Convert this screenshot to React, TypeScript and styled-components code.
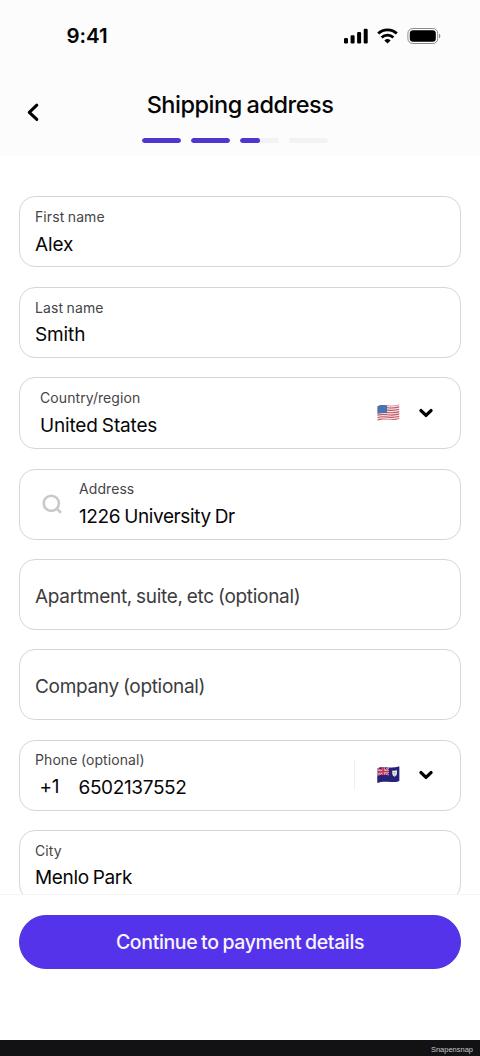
import React from 'react';
import styled, { createGlobalStyle } from 'styled-components';

const GlobalStyle = createGlobalStyle`
  * { box-sizing: border-box; }
  body {
    margin: 0;
    background: #fff;
    color: #060607;
    font-family: Inter, "Liberation Sans", sans-serif;
  }
`;

const Screen = styled.div`
  width: 480px;
  height: 1056px;
  display: flex;
  flex-direction: column;
  overflow: hidden;
  background: #fff;
`;

const Top = styled.header`
  flex: none;
  height: 156px;
  background: #fcfcfc;
`;

const StatusBar = styled.div`
  height: 72px;
  display: flex;
  justify-content: space-between;
  align-items: center;
  padding: 0 39.5px 0 66.5px;
`;

const Time = styled.span`
  font-size: 20.5px;
  font-weight: 600;
  line-height: 24px;
  letter-spacing: -0.05px;
`;

const StatusIcons = styled.div`
  display: flex;
  align-items: center;
  gap: 9px;
  svg { display: block; }
`;

const NavBar = styled.div`
  height: 84px;
  display: grid;
  grid-template-columns: 66px 1fr 66px;
`;

const BackButton = styled.button`
  border: 0;
  padding: 30px 0 0 26px;
  background: none;
  display: flex;
  align-items: flex-start;
`;

const Heading = styled.div`
  display: flex;
  flex-direction: column;
  align-items: center;
`;

const Title = styled.h1`
  margin: 19px 0 0;
  font-size: 23.5px;
  line-height: 28px;
  font-weight: 500;
  letter-spacing: -0.48px;
  word-spacing: -1px;
  white-space: nowrap;
`;

const Steps = styled.div`
  display: flex;
  gap: 10px;
  margin: 18.5px 9.5px 0 0;
`;

const Step = styled.div<{ $fill: number }>`
  width: 39px;
  height: 5px;
  border-radius: 3px;
  overflow: hidden;
  background: #f3f3f5;
  &::before {
    content: "";
    display: block;
    height: 100%;
    border-radius: 3px;
    width: ${p => p.$fill}%;
    background: #5135d0;
  }
`;

const Form = styled.main`
  flex: none;
  height: 739px;
  padding: 40px 19px 0;
  overflow: hidden;
  display: flex;
  flex-direction: column;
  border-bottom: 1px solid #f3f3f3;
`;

const Field = styled.div<{ $gap?: number; $height?: number; $inset?: number; $end?: number }>`
  flex: none;
  height: ${p => p.$height ?? 71}px;
  margin-bottom: ${p => p.$gap ?? 19}px;
  padding: 0 ${p => p.$end ?? 27}px 0 ${p => p.$inset ?? 15}px;
  border: 1px solid #d6d6d8;
  border-radius: 16px;
  display: flex;
`;

const Copy = styled.div<{ $top?: number }>`
  flex: 1;
  padding-top: ${p => p.$top ?? 11}px;
  white-space: nowrap;
`;

const Label = styled.div`
  font-size: 14px;
  line-height: 18px;
  color: #454547;
  letter-spacing: 0.08px;
  word-spacing: -0.5px;
`;

const Value = styled.div<{ $track?: number; $lead?: number }>`
  margin-top: ${p => p.$lead ?? 7}px;
  font-size: 19px;
  line-height: 24px;
  letter-spacing: ${p => p.$track ?? -0.12}px;
  word-spacing: -1px;
`;

const Placeholder = styled.div<{ $track: number }>`
  align-self: center;
  padding-top: 4px;
  font-size: 19px;
  line-height: 24px;
  color: #3c3c3e;
  letter-spacing: ${p => p.$track}px;
  word-spacing: -1px;
`;

const PhoneRow = styled(Value)`
  display: flex;
  padding-left: 4.5px;
`;

const Prefix = styled.span`
  width: 39px;
  margin-top: -1px;
  margin-bottom: 1px;
`;

const Picker = styled.div<{ $lift?: number }>`
  display: flex;
  align-items: center;
  gap: 19px;
  padding-bottom: ${p => p.$lift ?? 0}px;
  svg { display: block; }
`;

const Divider = styled.i`
  width: 1px;
  height: 31px;
  margin-right: 3px;
  background: #efeff0;
`;

const SearchSlot = styled.div`
  width: 37px;
  padding-top: 24px;
`;

const Footer = styled.footer`
  flex: 1;
  padding: 20px 19px 0;
`;

const Continue = styled.button`
  display: block;
  width: 100%;
  height: 54px;
  border: 1px solid #5335d8;
  border-radius: 27px;
  padding: 0;
  background: #5433ea;
  color: #f8f5ff;
  font-family: inherit;
  font-size: 19.5px;
  font-weight: 500;
  letter-spacing: -0.37px;
  word-spacing: -1px;
`;

const Credit = styled.div`
  flex: none;
  height: 16px;
  padding: 0 7px 0 0;
  background: #121214;
  color: #c6c6c8;
  font-family: "Liberation Sans", sans-serif;
  font-size: 7.5px;
  line-height: 19px;
  text-align: right;
`;

const Signal = () => (
  <svg width="24" height="16" viewBox="0 0 24 16">
    <rect x="0" y="10" width="4" height="5.5" rx="1.2" />
    <rect x="6.6" y="7.2" width="4" height="8.3" rx="1.2" />
    <rect x="13.1" y="4" width="4" height="11.5" rx="1.2" />
    <rect x="19.7" y="0.7" width="4" height="14.8" rx="1.2" />
  </svg>
);

const Wifi = () => (
  <svg width="21" height="16" viewBox="0 0 21 16">
    <g fill="none" stroke="#000" strokeWidth="2.8">
      <path d="M1.2 5.6a13.3 13.3 0 0 1 18.6 0" />
      <path d="M4.6 9.5a8.5 8.5 0 0 1 11.8 0" />
    </g>
    <path d="M10.5 15.6 7.4 12.5a4.5 4.5 0 0 1 6.2 0z" />
  </svg>
);

const Battery = () => (
  <svg width="34" height="16" viewBox="0 0 34 16">
    <rect x="0.9" y="0.5" width="29.8" height="15" rx="4.8" fill="none" stroke="#8c8c8c" />
    <rect x="2.8" y="2.3" width="26" height="11.4" rx="3.2" />
    <path d="M32 5.7c1.8.7 1.8 3.9 0 4.6z" fill="#8c8c8c" />
  </svg>
);

const Back = () => (
  <svg width="14" height="20" viewBox="0 0 14 20" fill="none" stroke="#000" strokeWidth="3.1" strokeLinecap="round" strokeLinejoin="round">
    <path d="M10.8 3.2 3.3 10.3l7.5 7.1" />
  </svg>
);

const Chevron = () => (
  <svg width="14" height="10" viewBox="0 0 14 10" fill="none" stroke="#000" strokeWidth="3.3" strokeLinecap="round" strokeLinejoin="round">
    <path d="M2 2.6 7 7.4l5-4.8" />
  </svg>
);

const Search = () => (
  <svg width="20" height="20" viewBox="0 0 20 20" fill="none" stroke="#c9c9c9" strokeWidth="2.6">
    <circle cx="9.3" cy="9.3" r="7.6" />
    <path d="m14.6 14.6 4.4 4.2" />
  </svg>
);

const wave = 'M.5 2.2C4 .4 7.5 .9 11 1.5S18.5 1.7 22.2 .5V15C18.5 16.3 14.5 16 11 15.6S4.5 15.4 .5 16.8z';

const FlagUS = () => (
  <svg width="23" height="18" viewBox="0 0 23 18">
    <clipPath id="us"><path d={wave} /></clipPath>
    <g clipPath="url(#us)">
      <rect width="23" height="18" fill="#f1e4e6" />
      <g fill="none" stroke="#c65765" strokeWidth="1.15">
        {[0, 2.35, 4.7, 7.05, 9.4, 11.75, 14.1].map(y => (
          <path key={y} d={`M0 ${y + 2}C4 ${y + 0.6} 7.5 ${y + 0.9} 11 ${y + 1.4}S18.5 ${y + 1.7} 23 ${y + 0.5}`} />
        ))}
      </g>
      <path d="M0 0H10V9.2C7 8.8 4 9 0 10z" fill="#4673ad" />
      <g stroke="#6088bc" strokeWidth=".5" strokeDasharray=".7 1.1">
        <path d="M1.5 3.5H9.5M1.5 5.3H9.5M1.5 7.1H9.5" />
      </g>
    </g>
  </svg>
);

const FlagAI = () => (
  <svg width="23" height="18" viewBox="0 0 23 18">
    <clipPath id="ai"><path d={wave} /></clipPath>
    <g clipPath="url(#ai)">
      <rect width="23" height="18" fill="#27217c" />
      <path d="M0 2.5 12 9.2M0 10 12 1.7" stroke="#eadfea" strokeWidth="1.8" />
      <path d="M0 2.5 12 9.2M0 10 12 1.7" stroke="#cf3550" strokeWidth="1" />
      <path d="M6.2 0V10M0 6 12 5.4" stroke="#f3e6ec" strokeWidth="2.8" />
      <path d="M6.2 0V10M0 6 12 5.4" stroke="#d02c47" strokeWidth="1.8" />
      <path d="M0 9.8C4 8.8 8 9 12 9.4V18H0zM12 0h11v18H12z" fill="#27217c" />
      <path d="M15.3 4.5q2.2.6 4.6-.2v3.4q-.2 2.2-2.3 3.1Q15.4 9.8 15.3 7.7z" fill="#f2f2ee" />
      <path d="M16.5 6.1h2.1v1.6h-2.1z" fill="#c9b48c" />
      <path d="M16.2 8.8h2.8l-1.4 1.2z" fill="#8db7cf" />
    </g>
  </svg>
);

export default function App() {
  return (
    <Screen>
      <GlobalStyle />
      <Top>
        <StatusBar>
          <Time>9:41</Time>
          <StatusIcons><Signal /><Wifi /><Battery /></StatusIcons>
        </StatusBar>
        <NavBar>
          <BackButton aria-label="Back"><Back /></BackButton>
          <Heading>
            <Title>Shipping address</Title>
            <Steps>
              <Step $fill={100} /><Step $fill={100} /><Step $fill={50} /><Step $fill={0} />
            </Steps>
          </Heading>
        </NavBar>
      </Top>
      <Form>
        <Field $gap={20}>
          <Copy><Label>First name</Label><Value>Alex</Value></Copy>
        </Field>
        <Field>
          <Copy><Label>Last name</Label><Value $lead={6}>Smith</Value></Copy>
        </Field>
        <Field $height={72} $gap={20} $inset={20}>
          <Copy><Label>Country/region</Label><Value $track={-0.17}>United States</Value></Copy>
          <Picker $lift={1}><FlagUS /><Chevron /></Picker>
        </Field>
        <Field $inset={22}>
          <SearchSlot><Search /></SearchSlot>
          <Copy $top={10}><Label>Address</Label><Value $track={-0.38}>1226 University Dr</Value></Copy>
        </Field>
        <Field><Placeholder $track={-0.29}>Apartment, suite, etc (optional)</Placeholder></Field>
        <Field $gap={20}><Placeholder $track={-0.31}>Company (optional)</Placeholder></Field>
        <Field $end={27.5}>
          <Copy $top={10}>
            <Label>Phone (optional)</Label>
            <PhoneRow $track={-0.36}><Prefix>+1</Prefix>6502137552</PhoneRow>
          </Copy>
          <Picker $lift={2}><Divider /><FlagAI /><Chevron /></Picker>
        </Field>
        <Field>
          <Copy><Label>City</Label><Value $track={-0.35} $lead={6}>Menlo Park</Value></Copy>
        </Field>
      </Form>
      <Footer><Continue>Continue to payment details</Continue></Footer>
      <Credit>Snapensnap</Credit>
    </Screen>
  );
}
